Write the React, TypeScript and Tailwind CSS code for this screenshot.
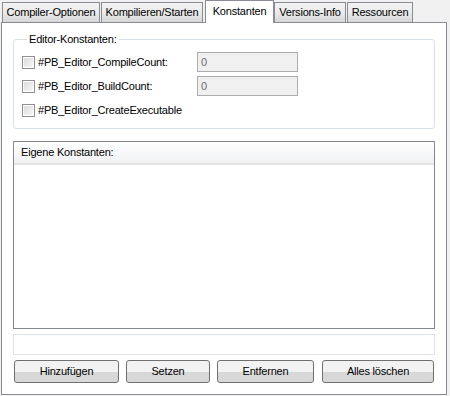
import type { ReactNode } from 'react';

const FONT = "font-['Liberation_Sans',Arial,sans-serif]";

function Tab({ label, active, className }: { label: string; active?: boolean; className: string }) {
  if (active) {
    return (
      <div
        className={`relative z-10 -mb-px flex h-[23px] items-start justify-center border border-b-0 border-[#898c95] bg-white pt-[4px] ${className}`}
      >
        {label}
      </div>
    );
  }
  return (
    <div
      className={`flex h-[20px] items-start justify-center border border-b-0 border-[#898c95] bg-gradient-to-b from-[#f2f2f2] via-[#ebebeb] to-[#d6d6d6] pt-[3px] ${className}`}
    >
      {label}
    </div>
  );
}

function CheckBox() {
  return (
    <div className="h-[13px] w-[13px] shrink-0 border border-[#8e8f8f] bg-white p-px">
      <div className="h-full w-full bg-gradient-to-br from-[#dcdcdc] to-[#f6f6f6]" />
    </div>
  );
}

function CounterRow({ label }: { label: string }) {
  return (
    <div className="flex h-[20px] items-center">
      <CheckBox />
      <span className="ml-[3px] w-[159px]">{label}</span>
      <div className="flex h-[20px] w-[101px] items-center border border-[#adadad] bg-[#f0f0f0] pl-[3px] text-[#6d6d6d]">
        0
      </div>
    </div>
  );
}

function Btn({ children, className }: { children: ReactNode; className: string }) {
  return (
    <button
      className={`h-[23px] rounded-[3px] border border-[#707070] bg-gradient-to-b from-[#f2f2f2] from-50% to-[#d8d8d8] to-50% font-normal text-black ${className}`}
    >
      {children}
    </button>
  );
}

export default function App() {
  return (
    <div
      className={`h-[396px] w-[450px] overflow-hidden bg-[#f0f0f0] text-[11px] leading-[13px] tracking-[-0.2px] text-black ${FONT}`}
    >
      <div className="flex h-[22px] items-end pl-[2px]">
        <Tab label="Compiler-Optionen" className="w-[98px]" />
        <Tab label="Kompilieren/Starten" className="ml-px w-[102px]" />
        <Tab label="Konstanten" active className="ml-[2px] w-[69px]" />
        <Tab label="Versions-Info" className="w-[72px]" />
        <Tab label="Ressourcen" className="ml-px w-[66px]" />
      </div>

      <div className="ml-px flex h-[373px] w-[446px] flex-col border border-[#898c95] bg-white px-[11px]">
        <fieldset className="mt-[10px] h-[96px] shrink-0 rounded-[3px] border border-[#d5dfe5] pl-[8px]">
          <legend className="ml-[5px] px-[2px]">Editor-Konstanten:</legend>
          <div className="mt-[6px] flex flex-col gap-[4px]">
            <CounterRow label="#PB_Editor_CompileCount:" />
            <CounterRow label="#PB_Editor_BuildCount:" />
            <div className="flex h-[20px] items-center">
              <CheckBox />
              <span className="ml-[3px]">#PB_Editor_CreateExecutable</span>
            </div>
          </div>
        </fieldset>

        <div className="mt-[12px] flex h-[188px] shrink-0 flex-col border border-[#828790] bg-white">
          <div className="flex h-[23px] items-center border-b-2 border-[#e3e3e3] bg-gradient-to-b from-white to-[#f1f2f4] pl-[7px]">
            Eigene Konstanten:
          </div>
        </div>

        <div className="mt-[5px] h-[21px] shrink-0 border border-[#dde3e9] bg-white" />

        <div className="mt-[5px] flex">
          <Btn className="ml-px w-[105px]">Hinzufügen</Btn>
          <Btn className="ml-[7px] w-[84px]">Setzen</Btn>
          <Btn className="ml-[7px] w-[97px]">Entfernen</Btn>
          <Btn className="ml-[8px] w-[112px]">Alles löschen</Btn>
        </div>
      </div>
    </div>
  );
}
